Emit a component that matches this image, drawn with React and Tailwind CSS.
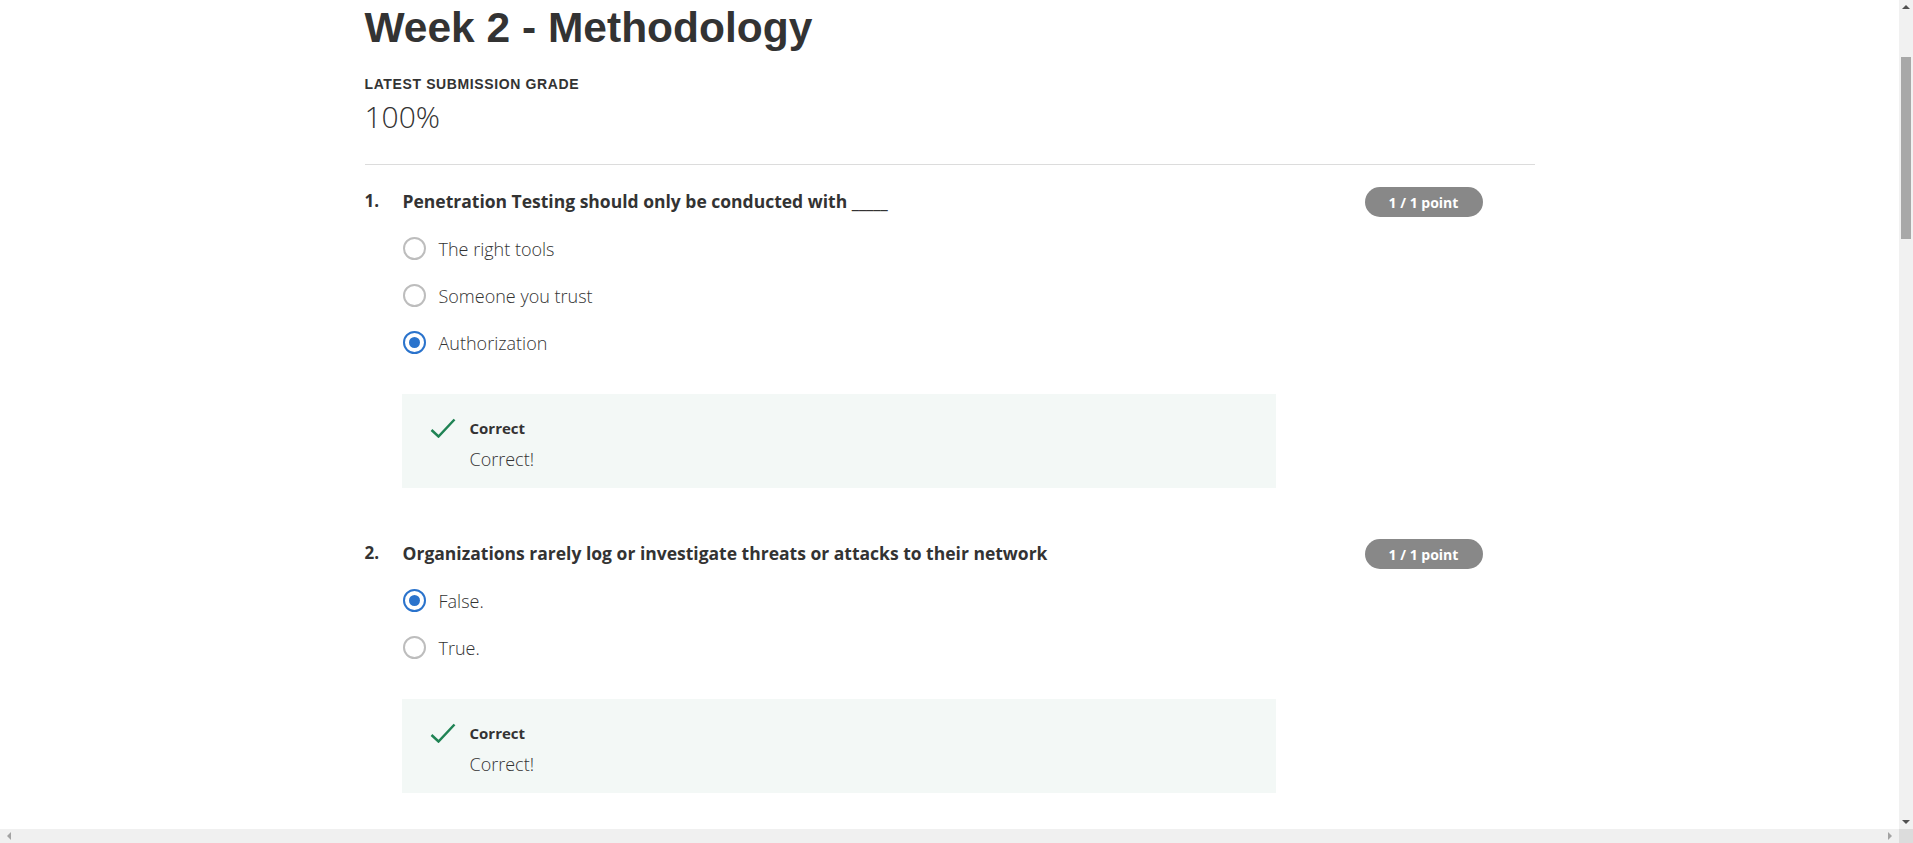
import React from 'react';

const questions = [
  {
    n: 1,
    text: 'Penetration Testing should only be conducted with _____',
    options: ['The right tools', 'Someone you trust', 'Authorization'],
    selected: 2,
  },
  {
    n: 2,
    text: 'Organizations rarely log or investigate threats or attacks to their network',
    options: ['False.', 'True.'],
    selected: 0,
  },
];

function Radio({ checked }) {
  if (checked) {
    return (
      <span className="w-[23px] h-[23px] rounded-full border-2 border-[#2a73cc] flex items-center justify-center shrink-0">
        <span className="w-[11px] h-[11px] rounded-full bg-[#2a73cc]" />
      </span>
    );
  }
  return <span className="w-[23px] h-[23px] rounded-full border-2 border-[#bdbdbd] shrink-0" />;
}

function Feedback() {
  return (
    <div className="ml-[-1px] w-[874px] h-[94px] bg-[#f3f8f6] flex pt-[24px] pl-[28px]">
      <svg width="26" height="20" viewBox="0 0 26 20" className="shrink-0">
        <polyline points="1.5,12 8.5,18.5 24.5,1.5" fill="none" stroke="#1f8354" strokeWidth="2.5" />
      </svg>
      <div className="ml-[14px]">
        <div className="text-[15px] leading-[20px] font-bold text-[#333]">Correct</div>
        <div className="text-[18px] leading-[24px] font-light text-[#333] mt-[9px]">Correct!</div>
      </div>
    </div>
  );
}

function Question({ q, first }) {
  return (
    <div className={first ? 'mt-[24px]' : 'mt-[53px]'}>
      <div className="flex items-start">
        <div className="w-[38px] text-[17px] leading-[24px] font-bold text-[#333]">{q.n}.</div>
        <div className="flex-1">
          <div className="text-[17.5px] leading-[24px] font-bold text-[#333]">{q.text}</div>
          <div className="mt-[12px]">
            {q.options.map((opt, i) => (
              <div key={opt} className="h-[47px] flex items-center">
                <Radio checked={i === q.selected} />
                <span className="ml-[13px] text-[18px] leading-[24px] font-light text-[#333]">{opt}</span>
              </div>
            ))}
          </div>
          <div className="mt-[28px]">
            <Feedback />
          </div>
        </div>
        <div className="w-[170px] mt-[-2px]">
          <span className="inline-flex items-center justify-center w-[118px] h-[30px] rounded-full bg-[#888888] text-white text-[14px] font-bold">
            1 / 1 point
          </span>
        </div>
      </div>
    </div>
  );
}

export default function App() {
  return (
    <div className="w-[1913px] h-[843px] flex flex-col overflow-hidden bg-white" style={{ fontFamily: '"Open Sans", sans-serif' }}>
      <div className="flex flex-1 min-h-0">
        <div className="flex-1 overflow-hidden">
          <div className="w-[1170px] mx-auto pt-[4px]">
            <h1 className="text-[42.5px] leading-[48px] font-bold text-[#333]" style={{ fontFamily: '"Liberation Sans", Arial, sans-serif' }}>
              Week 2 - Methodology
            </h1>
            <div className="mt-[22px] text-[14px] leading-[20px] font-bold tracking-[0.62px] text-[#333]" style={{ fontFamily: '"Liberation Sans", Arial, sans-serif' }}>
              LATEST SUBMISSION GRADE
            </div>
            <div className="mt-[5px] text-[30px] leading-[36px] font-light text-[#333]">100%</div>
            <div className="mt-[29px] h-px bg-[#dcdcdc]" />
            {questions.map((q, i) => (
              <Question key={q.n} q={q} first={i === 0} />
            ))}
          </div>
        </div>
        <div className="w-[14px] bg-[#f1f1f1] flex flex-col items-center">
          <div className="h-[14px] flex items-center justify-center">
            <span className="w-0 h-0 border-l-[4px] border-r-[4px] border-b-[4px] border-l-transparent border-r-transparent border-b-[#505050]" />
          </div>
          <div className="mt-[43px] w-[10px] h-[182px] bg-[#a8a8a8]" />
          <div className="flex-1" />
          <div className="h-[14px] flex items-center justify-center">
            <span className="w-0 h-0 border-l-[4px] border-r-[4px] border-t-[4px] border-l-transparent border-r-transparent border-t-[#505050]" />
          </div>
        </div>
      </div>
      <div className="h-[14px] flex">
        <div className="flex-1 bg-[#f0f0f0] flex items-center justify-between px-[7px]">
          <span className="w-0 h-0 border-t-[4px] border-b-[4px] border-r-[4px] border-t-transparent border-b-transparent border-r-[#a3a3a3]" />
          <span className="w-0 h-0 border-t-[4px] border-b-[4px] border-l-[4px] border-t-transparent border-b-transparent border-l-[#a3a3a3]" />
        </div>
        <div className="w-[14px] bg-[#dcdcdc]" />
      </div>
    </div>
  );
}
